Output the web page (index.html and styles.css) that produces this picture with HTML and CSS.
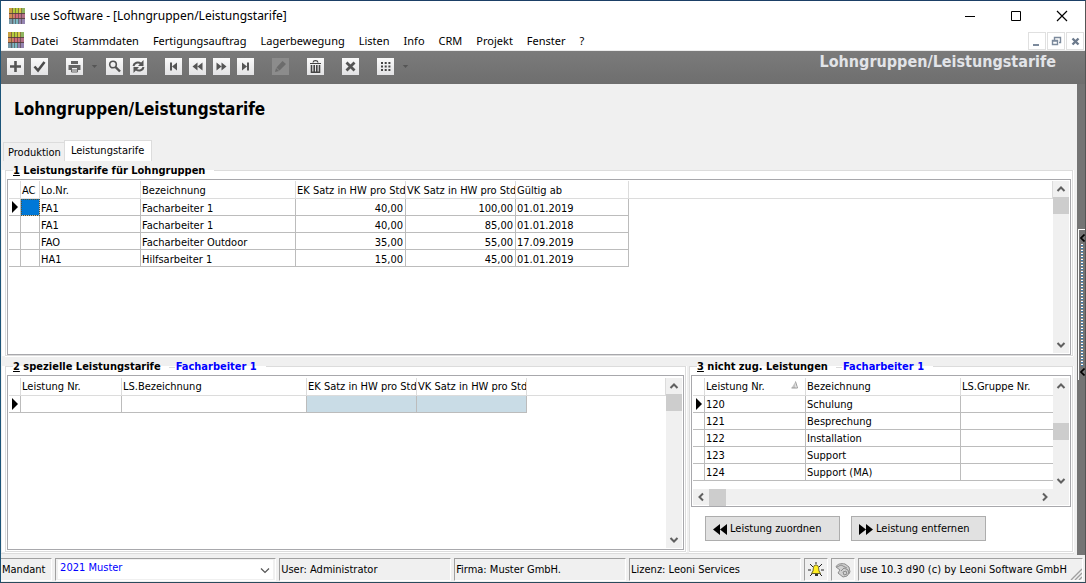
FILE: index.html
```
<!DOCTYPE html>
<html lang="de">
<head>
<meta charset="utf-8">
<title>use Software - [Lohngruppen/Leistungstarife]</title>
<link rel="stylesheet" href="styles.css">
</head>
<body>
<svg class="defs" aria-hidden="true">
  <symbol id="logo" viewBox="0 0 16 16">
    <path fill="#c8a040" d="M0 0h4v5H0z"/><path fill="#b5cc3c" d="M4 0h6v5H4z"/><path fill="#d8c648" d="M10 0h3v5h-3z"/><path fill="#8fb560" d="M13 0h3v5h-3z"/>
    <path fill="#d08a58" d="M0 5h5v6H0z"/><path fill="#d46a78" d="M5 5h6v6H5z"/><path fill="#b47088" d="M11 5h5v6h-5z"/>
    <path fill="#7a9aa8" d="M0 11h5v5H0z"/><path fill="#7cb8c4" d="M5 11h5v5H5z"/><path fill="#9484b0" d="M10 11h6v5h-6z"/>
    <path stroke="#4a3c38" stroke-opacity=".8" d="M0 5.500h16M0 10.500h16"/>
    <path stroke="#4a3c38" stroke-opacity=".55" d="M3.500 0v16M6.500 0v16M9.500 0v16M12.500 0v16"/>
  </symbol>
  <symbol id="up" viewBox="0 0 16 16"><path d="M4.500 10 8 6.500l3.500 3.500" fill="none" stroke="#606060" stroke-width="2"/></symbol>
  <symbol id="down" viewBox="0 0 16 16"><path d="M4.500 6 8 9.500 11.500 6" fill="none" stroke="#606060" stroke-width="2"/></symbol>
  <symbol id="left" viewBox="0 0 16 16"><path d="M10 4.500 6.500 8l3.500 3.500" fill="none" stroke="#606060" stroke-width="2"/></symbol>
  <symbol id="right" viewBox="0 0 16 16"><path d="M6 4.500 9.500 8 6 11.500" fill="none" stroke="#606060" stroke-width="2"/></symbol>
  <symbol id="row" viewBox="0 0 6 12"><path d="M0 0v12l6-6z"/></symbol>
</svg>
<div class="window">
  <header class="titlebar">
    <svg class="logo"><use href="#logo"/></svg>
    <span class="caption">use Software - [Lohngruppen/Leistungstarife]</span>
    <div class="controls">
      <button aria-label="Minimieren"><svg viewBox="0 0 12 12"><path d="M1 6.500h10" stroke="#000"/></svg></button>
      <button aria-label="Maximieren"><svg viewBox="0 0 12 12"><path d="M1.500 1.500h9v9h-9z" fill="none" stroke="#000"/></svg></button>
      <button aria-label="Schließen"><svg viewBox="0 0 12 12"><path d="m1 1 10 10M11 1 1 11" stroke="#000" stroke-width="1.200"/></svg></button>
    </div>
  </header>
  <nav class="menubar">
    <svg class="logo"><use href="#logo"/></svg>
    <div class="menu">
      <button>Datei</button><button>Stammdaten</button><button>Fertigungsauftrag</button><button>Lagerbewegung</button><button>Listen</button><button>Info</button><button>CRM</button><button>Projekt</button><button>Fenster</button><button>?</button>
    </div>
    <div class="mdi">
      <button aria-label="Minimieren"><svg viewBox="0 0 16 16"><path d="M4 11h6v2H4z" fill="#7c8a9c"/></svg></button>
      <button aria-label="Wiederherstellen"><svg viewBox="0 0 16 16"><path d="M6.500 7V4.500h6v5H11M6 4.500h7M4.500 7.500h5v4h-5zM4 8h6" fill="none" stroke="#7c8a9c" stroke-width="1.400"/></svg></button>
      <button aria-label="Schließen"><svg viewBox="0 0 16 16"><path d="m5.500 5.500 6 6M11.500 5.500l-6 6" stroke="#6c7a8c" stroke-width="2.400"/></svg></button>
    </div>
  </nav>
  <div class="toolbar">
    <div class="tools">
      <div class="group">
        <button aria-label="Neu"><svg viewBox="0 0 17 17"><path d="M8.500 3v11M3 8.500h11" stroke="#555" stroke-width="2.600"/></svg></button>
        <button aria-label="Speichern"><svg viewBox="0 0 17 17"><path d="m3.500 8.500 3.500 4L13.500 4" fill="none" stroke="#4c4c4c" stroke-width="2.600"/></svg></button>
      </div>
      <div class="group">
        <button aria-label="Drucken"><svg viewBox="0 0 17 17"><path fill="#666" d="M5 3h7v3H5zM2.500 7h12v5H12v-2H5v2H2.500z"/><path fill="none" stroke="#666" d="M5.500 10v4h6v-4M6 12h5"/></svg></button>
        <span class="drop"></span>
        <button aria-label="Suchen"><svg viewBox="0 0 17 17"><circle cx="7" cy="6.500" r="3.300" fill="none" stroke="#555" stroke-width="1.600"/><path d="m9.500 9 4.500 4.500" stroke="#555" stroke-width="2.400"/></svg></button>
        <button aria-label="Aktualisieren"><svg viewBox="0 0 17 17"><path d="M3.500 8C4 4.500 8 3.500 11 5.500M13.500 9c-.5 3.500-4.500 4.500-7.500 2.500" fill="none" stroke="#555" stroke-width="2"/><path fill="#555" d="M13.500 2v6H8zM3.500 15V9H9z"/></svg></button>
      </div>
      <div class="group">
        <button aria-label="Erster"><svg viewBox="0 0 17 17"><path fill="#555" d="M5 4.500h2v8H5zM12 4.500v8l-5-4z"/></svg></button>
        <button aria-label="Zurück"><svg viewBox="0 0 17 17"><path fill="#555" d="M8.500 4.500v8l-5-4zM13.500 4.500v8l-5-4z"/></svg></button>
        <button aria-label="Weiter"><svg viewBox="0 0 17 17"><path fill="#555" d="M3.500 4.500v8l5-4zM8.500 4.500v8l5-4z"/></svg></button>
        <button aria-label="Letzter"><svg viewBox="0 0 17 17"><path fill="#555" d="M5 4.500v8l5-4zM10 4.500h2v8h-2z"/></svg></button>
      </div>
      <button class="off" aria-label="Bearbeiten" disabled><svg viewBox="0 0 17 17"><path fill="#6c6c6c" d="m3 14 1-4 3 3zM4.500 9.500 10.500 3l3.500 3-6.500 6.500z"/></svg></button>
      <button aria-label="Löschen"><svg viewBox="0 0 17 17"><path fill="none" stroke="#444" stroke-width="1.200" d="M6 4.500C6.500 2 10.500 2 11 4.500M3 5.500h11"/><path fill="none" stroke="#444" stroke-width="1.600" d="M4.500 7v7.200h8V7M7.200 7v7M9.800 7v7"/></svg></button>
      <button aria-label="Abbrechen"><svg viewBox="0 0 17 17"><path d="m4.500 4.500 8 8M12.500 4.500l-8 8" stroke="#555" stroke-width="2.800"/></svg></button>
      <div class="group">
        <button aria-label="Raster"><svg viewBox="0 0 17 17"><path d="M4 5h10M4 8.500h10M4 12h10" stroke="#444" stroke-width="2" stroke-dasharray="2 1.700"/></svg></button>
        <span class="drop"></span>
      </div>
    </div>
    <strong class="banner">Lohngruppen/Leistungstarife</strong>
  </div>
  <div class="workspace">
    <main class="form">
      <h1>Lohngruppen/Leistungstarife</h1>
      <div class="tabs" role="tablist">
        <button role="tab" aria-selected="false">Produktion</button>
        <button role="tab" aria-selected="true">Leistungstarife</button>
      </div>
      <div class="page">
        <fieldset class="tariffs">
          <legend><b><u>1</u> Leistungstarife für Lohngruppen</b></legend>
          <div class="grid">
            <div class="view">
              <table>
                <colgroup><col class="c-mark"><col class="c-ac"><col class="c-nr"><col class="c-name"><col class="c-rate"><col class="c-rate"><col class="c-date"><col></colgroup>
                <thead><tr><th></th><th>AC</th><th>Lo.Nr.</th><th>Bezeichnung</th><th>EK Satz in HW pro Std</th><th>VK Satz in HW pro Std</th><th>Gültig ab</th><th></th></tr></thead>
                <tbody>
                  <tr><td><svg class="mark"><use href="#row"/></svg></td><td class="focus"></td><td>FA1</td><td>Facharbeiter 1</td><td class="num">40,00</td><td class="num">100,00</td><td>01.01.2019</td></tr>
                  <tr><td></td><td></td><td>FA1</td><td>Facharbeiter 1</td><td class="num">40,00</td><td class="num">85,00</td><td>01.01.2018</td></tr>
                  <tr><td></td><td></td><td>FAO</td><td>Facharbeiter Outdoor</td><td class="num">35,00</td><td class="num">55,00</td><td>17.09.2019</td></tr>
                  <tr><td></td><td></td><td>HA1</td><td>Hilfsarbeiter 1</td><td class="num">15,00</td><td class="num">45,00</td><td>01.01.2019</td></tr>
                </tbody>
              </table>
            </div>
            <div class="vscroll"><button aria-label="Nach oben"><svg><use href="#up"/></svg></button><div class="track"><i></i></div><button aria-label="Nach unten"><svg><use href="#down"/></svg></button></div>
          </div>
        </fieldset>
        <fieldset class="special">
          <legend><b><u>2</u> spezielle Leistungstarife</b><b class="ref">Facharbeiter 1</b></legend>
          <div class="grid">
            <div class="view">
              <table>
                <colgroup><col class="c-mark"><col class="c-nr"><col class="c-long"><col class="c-rate"><col class="c-rate"><col></colgroup>
                <thead><tr><th></th><th>Leistung Nr.</th><th>LS.Bezeichnung</th><th>EK Satz in HW pro Std</th><th>VK Satz in HW pro Std</th><th></th></tr></thead>
                <tbody><tr><td><svg class="mark"><use href="#row"/></svg></td><td></td><td></td><td class="tint"></td><td class="tint"></td></tr></tbody>
              </table>
            </div>
            <div class="vscroll"><button aria-label="Nach oben"><svg><use href="#up"/></svg></button><div class="track"><i></i></div><button aria-label="Nach unten"><svg><use href="#down"/></svg></button></div>
          </div>
        </fieldset>
        <fieldset class="unassigned">
          <legend><b><u>3</u> nicht zug. Leistungen</b><b class="ref">Facharbeiter 1</b></legend>
          <div class="grid">
            <div class="view">
              <table>
                <colgroup><col class="c-mark"><col class="c-nr"><col class="c-name"><col></colgroup>
                <thead><tr><th></th><th><span class="sorted">Leistung Nr.<svg viewBox="0 0 7 8"><path d="M.5 7 4.500.5V7z" fill="#c4c4c4"/><path d="M4.500.5 6.500 7H.5" fill="none" stroke="#999"/></svg></span></th><th>Bezeichnung</th><th class="open">LS.Gruppe Nr.</th></tr></thead>
                <tbody>
                  <tr><td><svg class="mark"><use href="#row"/></svg></td><td>120</td><td>Schulung</td><td class="open"></td></tr>
                  <tr><td></td><td>121</td><td>Besprechung</td><td class="open"></td></tr>
                  <tr><td></td><td>122</td><td>Installation</td><td class="open"></td></tr>
                  <tr><td></td><td>123</td><td>Support</td><td class="open"></td></tr>
                  <tr><td></td><td>124</td><td>Support (MA)</td><td class="open"></td></tr>
                </tbody>
              </table>
            </div>
            <div class="vscroll middle"><button aria-label="Nach oben"><svg><use href="#up"/></svg></button><div class="track"><i></i></div><button aria-label="Nach unten"><svg><use href="#down"/></svg></button></div>
            <div class="hscroll"><button aria-label="Nach links"><svg><use href="#left"/></svg></button><div class="track"><i></i></div><button aria-label="Nach rechts"><svg><use href="#right"/></svg></button></div>
          </div>
          <div class="actions">
            <button><svg viewBox="0 0 14 11"><path d="M7 0v11L0 5.500zM14 0v11L7 5.500z"/></svg>Leistung zuordnen</button>
            <button><svg viewBox="0 0 14 11"><path d="M0 0v11l7-5.500zM7 0v11l7-5.500z"/></svg>Leistung entfernen</button>
          </div>
        </fieldset>
      </div>
    </main>
    <aside class="dock">
      <button class="splitter" aria-label="Seitenleiste öffnen">
        <svg viewBox="0 0 5 8"><path d="M4.500.5 1 4l3.500 3.500" fill="none" stroke="#000" stroke-width="1.600"/></svg>
        <span class="dots"></span>
        <svg viewBox="0 0 5 8"><path d="M4.500.5 1 4l3.500 3.500" fill="none" stroke="#000" stroke-width="1.600"/></svg>
      </button>
    </aside>
  </div>
  <footer class="status">
    <label class="cell s-label" for="mandant">Mandant</label>
    <div class="cell s-combo">
      <select id="mandant"><option>2021 Muster</option></select>
      <svg class="chevron" viewBox="0 0 10 6"><path d="m1 .5 4 4 4-4" fill="none" stroke="#555" stroke-width="1.200"/></svg>
    </div>
    <div class="cell s-text">User: Administrator</div>
    <div class="cell s-text">Firma: Muster GmbH.</div>
    <div class="cell s-text">Lizenz: Leoni Services</div>
    <div class="cell s-icon"><svg viewBox="0 0 16 16"><path d="M8 0v2M2 2l3 3M14 2l-3 3M0 8h3M13 8h3M2 14l3-3M14 14l-3-3" stroke="#222"/><path d="M8 3C5 3 5.500 7 5 9l-1.500 2.500h9L11 9c-.5-2 0-6-3-6z" fill="#ffee22" stroke="#665f20"/><path d="M7 12h3v2H7z" fill="#333"/></svg></div>
    <div class="cell s-icon"><svg viewBox="0 0 16 16"><path d="M1 5c1-3 5-4 9-3l4 3 1 5-3 4-4 1-5-4 2-3zM2 5l4-2 6 3M6 9l3-3 4 2 1 4M8 10l3-1 1 3-3 1z" fill="#d0d0d0" stroke="#8c8c8c"/></svg></div>
    <div class="cell s-version">use 10.3 d90 (c) by Leoni Software GmbH<svg class="grip" viewBox="0 0 12 12"><path d="M1 12 12 1M5 12l7-7M9 12l3-3" stroke="#a0a0a0" stroke-width="1.400"/></svg></div>
  </footer>
</div>
</body>
</html>
```
FILE: styles.css
```
* { box-sizing: border-box; }
body { margin: 0; }
.defs { position: absolute; width: 0; height: 0; }
button { font: inherit; color: inherit; padding: 0; margin: 0; border: 0; background: none; border-radius: 0; }
svg { display: block; flex: none; }

.window {
  display: flex; flex-direction: column; height: 100vh; min-height: 480px;
  border: 1px solid #1c5478; border-top-color: #1b3f66; border-right-color: #555; border-bottom-color: #2a4a5c;
  background: #f0f0f0; color: #000;
  font: 11px/14px "DejaVu Sans Condensed", Tahoma, "DejaVu Sans", sans-serif;
}
.logo { width: 16px; height: 16px; }

.titlebar { display: flex; align-items: center; height: 29px; padding-left: 8px; background: #fff; font: 12px/16px "Noto Sans", sans-serif; }
.caption { margin-left: 5px; padding-top: 1px; flex: 1; }
.controls { display: flex; }
.controls button { width: 46px; height: 28px; display: grid; place-items: center; }
.controls svg { width: 12px; height: 12px; }

.menubar { display: flex; align-items: center; height: 21px; padding: 0 1px 0 7px; background: #fff; border-bottom: 1px solid #ececec; font: 11px/16px "Noto Sans", sans-serif; }
.menu { display: flex; flex: 1; gap: 14px; margin-left: 7px; padding-top: 2px; }
.mdi { display: flex; gap: 1px; padding-top: 1px; }
.mdi button { width: 18px; height: 18px; border: 1px solid #e0e0e0; }
.mdi svg { width: 16px; height: 16px; }

.toolbar { display: flex; justify-content: space-between; height: 33px; padding: 0 29px 0 6px; background: linear-gradient(#7b7b7b, #6e6e6e); }
.tools { display: flex; align-items: center; gap: 18px; padding-bottom: 2px; }
.group { display: flex; align-items: center; gap: 7px; }
.tools button { width: 17px; height: 17px; background: linear-gradient(#fafafa, #e2e2e4); }
.tools button.off { background: #8c8c8c; }
.tools svg { width: 17px; height: 17px; }
.drop { width: 9px; height: 3px; background: #555; clip-path: polygon(20% 0, 80% 0, 50% 100%); }
.banner { color: #e2e4e8; font: bold 16px/22px "DejaVu Sans Condensed", Tahoma, sans-serif; }

.workspace { display: flex; flex: 1; min-height: 0; }
.form { display: flex; flex-direction: column; flex: 1; min-width: 0; padding: 0 3px 1px 0; }
h1 { margin: 0; padding: 14px 13px 20px; font: bold 17px/22px "DejaVu Sans Condensed", Tahoma, sans-serif; }
.tabs { display: flex; align-items: flex-end; height: 21px; padding-left: 2px; }
.tabs button { height: 19px; padding: 1px 3px 0 4px; border: 1px solid #dcdcdc; border-width: 1px 0 0 1px; }
.tabs button[aria-selected="true"] { height: 21px; padding: 0 7px 1px 6px; border-width: 1px 1px 0; background: #fff; }

.page {
  display: grid; flex: 1; min-height: 0; gap: 3px 2px;
  grid-template: minmax(0, 1fr) minmax(0, 1fr) / minmax(0, 685fr) minmax(0, 386fr);
  border-bottom: 1px solid #dcdcdc;
}
fieldset {
  display: flex; flex-direction: column; min-width: 0; margin: 0 1px 1px 4px; padding: 0 1px 1px;
  border: 1px solid #dcdcdc; background: #fff; box-shadow: -3px 0 #fff, 1px 0 #fff, 0 1px #fff;
}
.tariffs { grid-column: 1 / -1; margin-bottom: 0; padding-bottom: 0; }
.special { margin-right: 0; }
.unassigned { margin-left: 1px; box-shadow: 1px 0 #fff, 0 1px #fff; }
legend { display: flex; align-items: center; width: 100%; height: 16px; padding: 0; line-height: 16px; }
.tariffs legend { height: 18px; }
legend b { padding-top: 1px; }
legend::before { content: ""; width: 6px; height: 1px; background: #dcdcdc; }
legend::after { content: ""; flex: 1; height: 1px; margin-left: 9px; background: #dcdcdc; }
.ref { display: flex; align-items: center; color: #00f; }
.ref::before { content: ""; width: 6px; height: 1px; margin: 0 1px 0 8px; background: #dcdcdc; }

.grid { display: grid; grid-template: minmax(0, 1fr) auto / minmax(0, 1fr) auto; flex: 1; min-height: 0; padding: 1px; border: 1px solid #a8a8ac; background: #fff; }
.special .grid, .unassigned .grid { padding-top: 2px; }
.view { overflow: hidden; }
table { width: 100%; table-layout: fixed; border-spacing: 0; line-height: 12px; }
.c-mark { width: 12px; }
.c-ac { width: 19px; }
.c-nr { width: 101px; }
.c-name { width: 155px; }
.c-long { width: 185px; }
.c-rate { width: 110px; }
.c-date { width: 113px; }
th, td { padding: 2px 0 0 1px; text-align: left; font-weight: normal; white-space: nowrap; overflow: hidden; border: 0 solid #bcbcbc; border-width: 0 1px 1px 0; }
th { height: 18px; border-color: #dcdcdc; }
td { height: 17px; padding-top: 3px; }
td:first-child { padding: 0 0 0 3px; }
.num { text-align: right; padding-right: 2px; }
.open { border-right: 0; }
.focus { background: #0078d7; outline: 1px dotted #553; outline-offset: -1px; }
.tint { background: #c9dce6; }
.mark { width: 6px; height: 12px; }
.sorted { display: flex; justify-content: space-between; padding-right: 7px; }
.sorted svg { width: 7px; height: 8px; }

.vscroll { display: flex; flex-direction: column; width: 16px; background: #f0f0f0; }
.vscroll svg, .hscroll svg { width: 16px; height: 16px; }
.track { flex: 1; display: flex; }
.vscroll .track { flex-direction: column; }
.track i { display: block; width: 17px; height: 17px; max-width: 100%; background: #cdcdcd; }
.middle .track::before { content: ""; flex: 7; }
.middle .track::after { content: ""; flex: 8; }
.hscroll { display: flex; align-items: center; grid-column: 1 / -1; height: 16px; background: #f0f0f0; padding-right: 16px; }

.actions { display: flex; gap: 11px; padding: 9px 13px 9px 14px; }
.actions button { display: flex; align-items: center; gap: 3px; width: 135px; height: 25px; padding: 1px 0 0 7px; border: 1px solid #adadad; background: #e1e1e1; white-space: nowrap; }
.actions svg { width: 14px; height: 11px; }

.dock { display: flex; flex-direction: column; justify-content: center; width: 8px; background: #747474; }
.splitter { display: flex; flex-direction: column; align-items: center; gap: 2px; width: 7px; height: 151px; padding: 4px 0; margin: 0 0 31px 1px; border: 1px solid #fff; border-width: 1px 0 0 1px; }
.splitter svg { width: 5px; height: 8px; }
.dots { flex: 1; width: 2px; background: repeating-linear-gradient(#fff 0 1px, #3c7ab0 1px 2px, #888 2px 3px); }

.status { display: flex; gap: 3px; height: 27px; padding: 3px 2px 1px 0; }
.cell { display: flex; align-items: center; border: 1px solid #a0a0a0; border-color: #a0a0a0 #fff #fff #a0a0a0; padding: 1px 0 0 1px; white-space: nowrap; min-width: 0; }
.s-label { flex: 50; border-left: 0; }
.s-combo { flex: 219; position: relative; padding: 1px 2px; }
.s-text { flex: 172; }
.s-icon { flex: 0 0 24px; justify-content: center; padding: 0; }
.s-icon svg { width: 16px; height: 16px; }
.s-version { flex: 226; position: relative; }
select { appearance: none; width: 100%; height: 19px; padding: 0 2px 3px; border: 0; border-radius: 0; background: #fff; color: #00f; font: inherit; }
.chevron { position: absolute; right: 5px; top: 9px; width: 10px; height: 6px; }
.grip { position: absolute; right: 0; bottom: 0; width: 12px; height: 12px; }
```
